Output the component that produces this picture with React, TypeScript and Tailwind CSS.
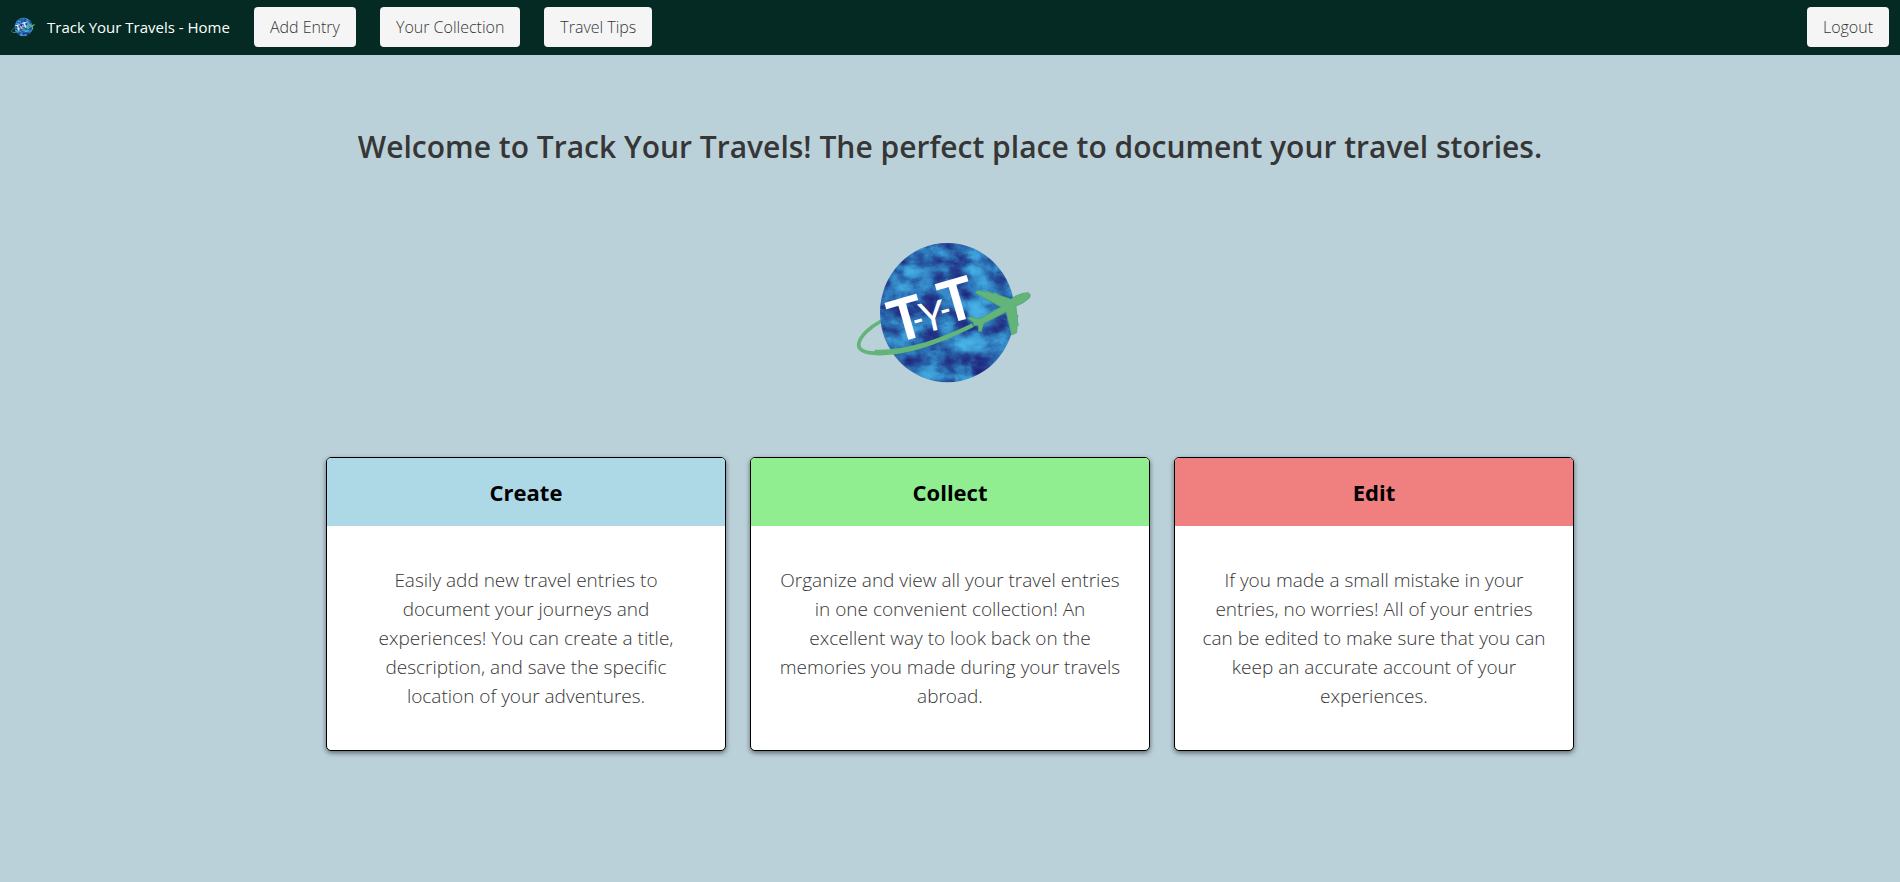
function TravelLogo({ id, className, viewBox }: { id: string; className: string; viewBox: string }) {
  return (
    <svg className={className} viewBox={viewBox} role="img" aria-label="Track Your Travels logo">
      <defs>
        <filter id={id} x="110" y="30" width="420" height="440" filterUnits="userSpaceOnUse" colorInterpolationFilters="sRGB">
          <feTurbulence type="fractalNoise" baseFrequency="0.013 0.019" numOctaves="7" seed="23" result="noise" />
          <feColorMatrix in="noise" type="matrix" values="0.4 0.3 0.3 0 0  0.4 0.3 0.3 0 0  0.4 0.3 0.3 0 0  0 0 0 0 1" />
          <feComponentTransfer result="clouds">
            <feFuncR type="table" tableValues="0.13 0.13 0.13 0.13 0.14 0.17 0.23 0.28 0.29 0.3 0.3" />
            <feFuncG type="table" tableValues="0.12 0.12 0.12 0.14 0.24 0.43 0.6 0.69 0.72 0.74 0.74" />
            <feFuncB type="table" tableValues="0.45 0.45 0.45 0.48 0.55 0.7 0.83 0.89 0.92 0.93 0.93" />
          </feComponentTransfer>
          <feComposite in="clouds" in2="SourceGraphic" operator="in" />
        </filter>
      </defs>
      <path d="M124 273 C92 290 58 318 56 344 C56 366 90 372 128 368" fill="none" stroke="#62b478" strokeWidth="11" />
      <ellipse cx="322" cy="248" rx="202" ry="209" fill="#2b5ba8" filter={`url(#${id})`} />
      <path d="M104 359 C200 362 300 328 396 280 L401 291 C300 341 200 379 104 376 Z" fill="#62b478" />
      <g fill="#ffffff" fontFamily="Lato, sans-serif" fontWeight="700" textAnchor="middle">
        <text x="216" y="326" fontSize="174" transform="rotate(-16 216 326)">T</text>
        <text x="242" y="298" fontSize="88" transform="rotate(-17 242 298)">-</text>
        <text x="286" y="301" fontSize="122" fontWeight="400" transform="rotate(-12 286 301)">Y</text>
        <text x="324" y="268" fontSize="88" transform="rotate(-17 324 268)">-</text>
        <text x="367" y="270" fontSize="174" transform="rotate(-16 367 270)">T</text>
      </g>
      <path
        d="M400 277 L382 264 L390 261 L418 267 L482 231 L405 188 L414 181 L440 186 Q445 180 450 188 L462 190 Q467 184 472 193 L512 207 Q540 188 565 188 Q575 193 568 204 Q552 220 528 228 L530 252 Q537 256 532 265 L533 278 Q539 284 531 290 L530 308 L515 315 L498 246 L431 281 L424 305 L416 304 L414 286 L401 288 Z"
        fill="#62b478"
        stroke="#4f9f75"
        strokeWidth="2"
        strokeLinejoin="round"
      />
    </svg>
  );
}

const links = ["Add Entry", "Your Collection", "Travel Tips"];

const cards = [
  {
    title: "Create",
    header: "bg-[#add8e6]",
    text: "Easily add new travel entries to document your journeys and experiences! You can create a title, description, and save the specific location of your adventures.",
  },
  {
    title: "Collect",
    header: "bg-[#90ee90]",
    text: "Organize and view all your travel entries in one convenient collection! An excellent way to look back on the memories you made during your travels abroad.",
  },
  {
    title: "Edit",
    header: "bg-[#f08080]",
    text: "If you made a small mistake in your entries, no worries! All of your entries can be edited to make sure that you can keep an accurate account of your experiences.",
  },
];

function NavButton({ label }: { label: string }) {
  return (
    <button type="button" className="h-10 rounded-[4px] bg-[#f5f5f5] px-4 text-base font-light text-[#363636]">
      {label}
    </button>
  );
}

export default function App() {
  return (
    <div className="min-h-screen bg-[#bbd1da] font-['Open_Sans','Noto_Sans',sans-serif]">
      <nav className="flex items-center gap-6 bg-[#042a23] px-[11px] pt-[7px] pb-2">
        <a href="#home" className="flex items-center gap-3 text-[15px] text-white">
          <TravelLogo id="nav-globe" className="h-6 w-6" viewBox="45 -15 530 530" />
          Track Your Travels - Home
        </a>
        {links.map((l) => (
          <NavButton key={l} label={l} />
        ))}
        <div className="ml-auto">
          <NavButton label="Logout" />
        </div>
      </nav>
      <main className="mx-auto flex max-w-[1248px] flex-col items-center pt-[68px]">
        <h1 className="text-center text-[30px] leading-12 font-semibold text-[#363636]">
          Welcome to Track Your Travels! The perfect place to document your travel stories.
        </h1>
        <TravelLogo id="main-globe" className="mt-[59px] h-[170px] w-[210px]" viewBox="15 0 630 510" />
        <section className="mt-[57px] grid w-full grid-cols-3 gap-6">
          {cards.map((c) => (
            <article key={c.title} className="overflow-hidden rounded-[5px] border border-black bg-white text-center shadow-[0_2px_5px_rgba(0,0,0,0.5)]">
              <h2 className={`${c.header} py-[18px] text-[22px] leading-8 font-bold text-black`}>{c.title}</h2>
              <p className="px-6 pt-10 pb-[39px] text-[19px] leading-[29px] font-light text-[#363636]">{c.text}</p>
            </article>
          ))}
        </section>
      </main>
    </div>
  );
}
